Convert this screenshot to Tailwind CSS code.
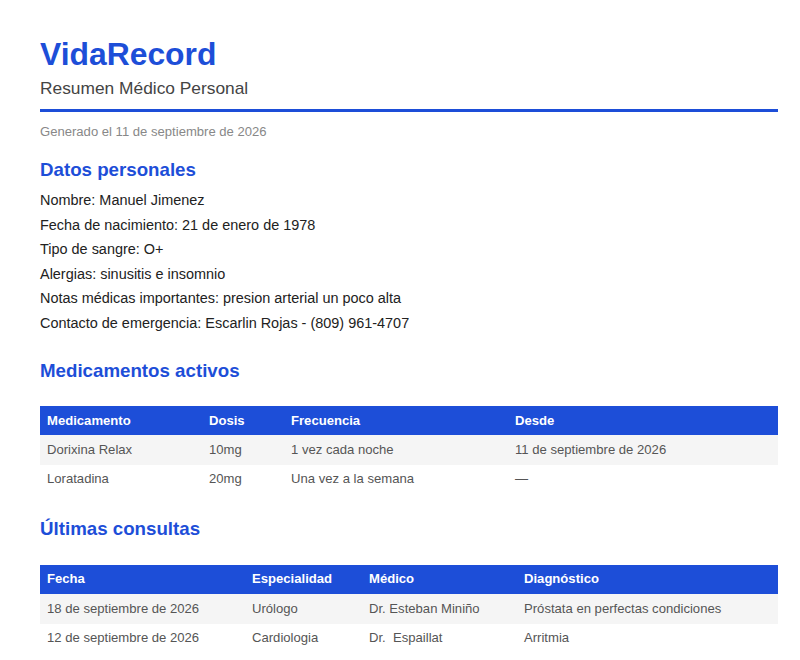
<!DOCTYPE html>
<html lang="es">
<head>
  <meta charset="UTF-8" />
  <title>VidaRecord</title>
  <script src="https://cdn.jsdelivr.net/npm/@tailwindcss/browser@4"></script>
</head>
<body class="bg-white text-[#222] font-['Liberation_Sans',Arial,sans-serif] overflow-hidden h-[660px]">
  <div class="pl-[40px] pr-[22px] pt-[32px]">

    <!-- Header -->
    <header class="border-b-[3px] border-[#1d4ed8] pb-[9px] mb-[12px]">
      <h1 class="text-[31.85px] leading-[45px] font-bold text-[#1d4ed8]">VidaRecord</h1>
      <p class="text-[17.35px] leading-[23px] text-[#444]">Resumen Médico Personal</p>
    </header>
    <p class="text-[13.08px] leading-[16px] text-[#888] mb-[17px]">Generado el 11 de septiembre de 2026</p>

    <!-- Datos personales -->
    <h2 class="text-[18.72px] leading-[26px] font-bold text-[#1d4ed8] mb-[5px]">Datos personales</h2>
    <div class="text-[14.45px] leading-[24.6px] mb-[22px]">
      <p>Nombre: Manuel Jimenez</p>
      <p>Fecha de nacimiento: 21 de enero de 1978</p>
      <p>Tipo de sangre: O+</p>
      <p>Alergias: sinusitis e insomnio</p>
      <p>Notas médicas importantes: presion arterial un poco alta</p>
      <p>Contacto de emergencia: Escarlin Rojas - (809) 961-4707</p>
    </div>

    <!-- Medicamentos -->
    <h2 class="text-[18.72px] leading-[26px] font-bold text-[#1d4ed8] mb-[22px]">Medicamentos activos</h2>
    <table class="w-full border-collapse text-[13.1px] text-left mb-[22px]">
      <thead class="bg-[#1d4ed8] text-white">
        <tr class="h-[29px]">
          <th class="w-[162px] pl-[7px] pt-[1px] font-bold">Medicamento</th>
          <th class="w-[82px] pl-[7px] pt-[1px] font-bold">Dosis</th>
          <th class="w-[224px] pl-[7px] pt-[1px] font-bold">Frecuencia</th>
          <th class="pl-[7px] pt-[1px] font-bold">Desde</th>
        </tr>
      </thead>
      <tbody class="text-[#555]">
        <tr class="h-[30px] bg-[#f5f5f5]">
          <td class="pl-[7px]">Dorixina Relax</td>
          <td class="pl-[7px]">10mg</td>
          <td class="pl-[7px]">1 vez cada noche</td>
          <td class="pl-[7px]">11 de septiembre de 2026</td>
        </tr>
        <tr class="h-[29px]">
          <td class="pl-[7px]">Loratadina</td>
          <td class="pl-[7px]">20mg</td>
          <td class="pl-[7px]">Una vez a la semana</td>
          <td class="pl-[7px]">—</td>
        </tr>
      </tbody>
    </table>

    <!-- Consultas -->
    <h2 class="text-[18.72px] leading-[26px] font-bold text-[#1d4ed8] mb-[23px]">Últimas consultas</h2>
    <table class="w-full border-collapse text-[13.1px] text-left">
      <thead class="bg-[#1d4ed8] text-white">
        <tr class="h-[29px]">
          <th class="w-[205px] pl-[7px] font-bold">Fecha</th>
          <th class="w-[117px] pl-[7px] font-bold">Especialidad</th>
          <th class="w-[155px] pl-[7px] font-bold">Médico</th>
          <th class="pl-[7px] font-bold">Diagnóstico</th>
        </tr>
      </thead>
      <tbody class="text-[#555]">
        <tr class="h-[30px] bg-[#f5f5f5]">
          <td class="pl-[7px]">18 de septiembre de 2026</td>
          <td class="pl-[7px]">Urólogo</td>
          <td class="pl-[7px]">Dr. Esteban Miniño</td>
          <td class="pl-[7px]">Próstata en perfectas condiciones</td>
        </tr>
        <tr class="h-[29px]">
          <td class="pl-[7px]">12 de septiembre de 2026</td>
          <td class="pl-[7px]">Cardiologia</td>
          <td class="pl-[7px] whitespace-pre">Dr.  Espaillat</td>
          <td class="pl-[7px]">Arritmia</td>
        </tr>
      </tbody>
    </table>
  </div>
</body>
</html>
